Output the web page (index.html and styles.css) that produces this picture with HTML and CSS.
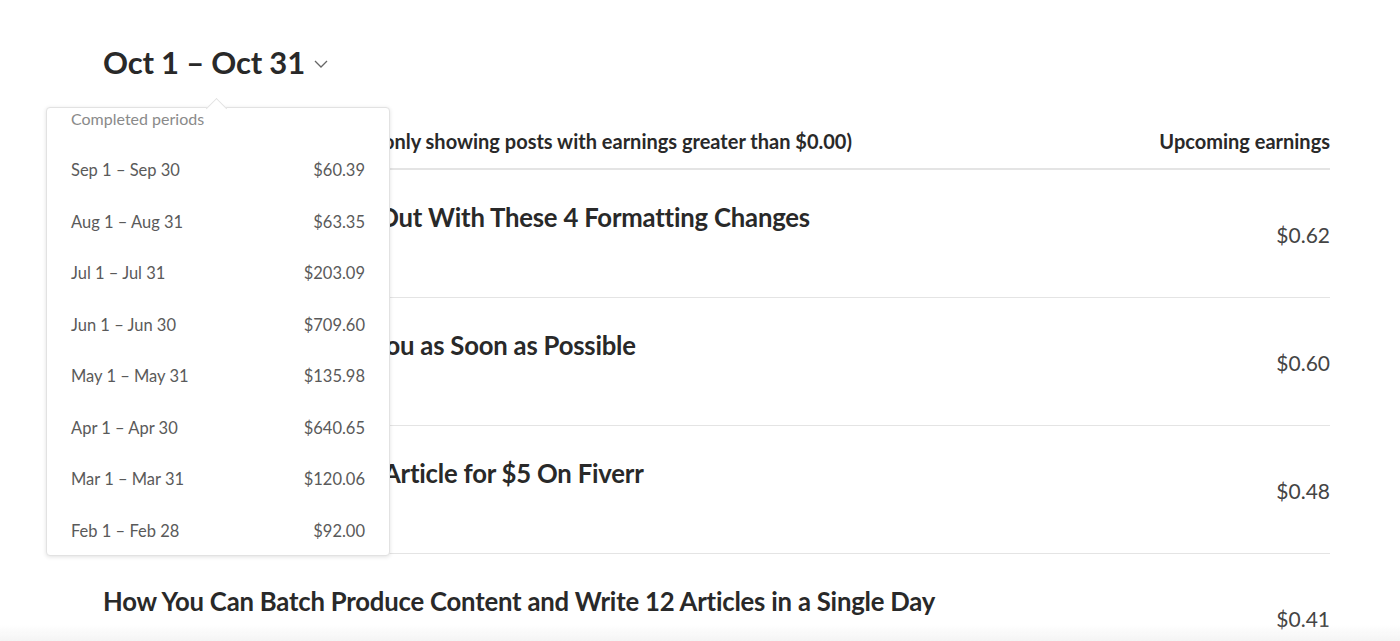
FILE: index.html
```html
<!DOCTYPE html>
<html lang="en">
<head>
<meta charset="utf-8">
<title>Earnings</title>
<link rel="stylesheet" href="styles.css">
</head>
<body>
<main class="page">
  <h1 class="period">Oct 1 – Oct 31 <svg class="chev" viewBox="0 0 14 8" width="14" height="8"><path d="M1 1 L7 7 L13 1" fill="none" stroke="#666" stroke-width="1.3"/></svg></h1>

  <div class="table">
    <div class="thead">
      <span class="th-title">Stories published in the period (only showing posts with earnings greater than $0.00)</span>
      <span class="th-amt">Upcoming earnings</span>
    </div>
    <div class="row">
      <span class="title">Make Your Article Stand Out With These 4 Formatting Changes</span>
      <span class="amt">$0.62</span>
    </div>
    <div class="row">
      <span class="title">Why Medium Must Pay You as Soon as Possible</span>
      <span class="amt">$0.60</span>
    </div>
    <div class="row">
      <span class="title">I Had Someone Write an Article for $5 On Fiverr</span>
      <span class="amt">$0.48</span>
    </div>
    <div class="row">
      <span class="title">How You Can Batch Produce Content and Write 12 Articles in a Single Day</span>
      <span class="amt">$0.41</span>
    </div>
  </div>
</main>

<div class="menu">
  <div class="menu-head">Completed periods</div>
  <ul class="menu-list">
    <li class="menu-item"><span>Sep 1 – Sep 30</span><span>$60.39</span></li>
    <li class="menu-item"><span>Aug 1 – Aug 31</span><span>$63.35</span></li>
    <li class="menu-item"><span>Jul 1 – Jul 31</span><span>$203.09</span></li>
    <li class="menu-item"><span>Jun 1 – Jun 30</span><span>$709.60</span></li>
    <li class="menu-item"><span>May 1 – May 31</span><span>$135.98</span></li>
    <li class="menu-item"><span>Apr 1 – Apr 30</span><span>$640.65</span></li>
    <li class="menu-item"><span>Mar 1 – Mar 31</span><span>$120.06</span></li>
    <li class="menu-item"><span>Feb 1 – Feb 28</span><span>$92.00</span></li>
  </ul>
</div>

<div class="bottom-fade"></div>
</body>
</html>
```

FILE: styles.css
```css
* { box-sizing: border-box; }

html, body {
  margin: 0;
  padding: 0;
  background: #ffffff;
  overflow: hidden;
}

body {
  font-family: Lato, "Open Sans", "Liberation Sans", sans-serif;
  color: #292929;
  width: 1400px;
  height: 641px;
}

.page {
  padding: 38px 70px 0 103px;
}

.period {
  margin: 0;
  font-size: 31px;
  line-height: 48px;
  font-weight: 700;
  color: #292929;
  letter-spacing: -0.2px;
  display: flex;
  align-items: center;
}

.chev {
  margin-left: 9px;
  margin-top: 4px;
}

.table {
  margin-top: 40px;
}

.thead {
  display: flex;
  justify-content: space-between;
  align-items: flex-end;
  height: 44px;
  padding-bottom: 15px;
  border-bottom: 2px solid #e4e4e4;
  font-size: 20px;
  font-weight: 700;
  color: #292929;
  white-space: nowrap;
}

.row {
  display: flex;
  justify-content: space-between;
  align-items: flex-start;
  height: 128px;
  border-bottom: 1px solid #e4e4e4;
  padding-top: 31px;
}

.title {
  font-size: 25.7px;
  line-height: 32px;
  font-weight: 700;
  color: #292929;
  letter-spacing: -0.2px;
}

.amt {
  font-size: 21px;
  line-height: 24px;
  color: #444;
  margin-top: 22px;
}

.menu {
  position: absolute;
  left: 46px;
  top: 107px;
  width: 344px;
  height: 449px;
  background: #fff;
  border: 1px solid #e2e2e2;
  border-radius: 4px;
  box-shadow: 0 1px 4px rgba(0,0,0,0.12);
  padding: 0 24px 0 24px;
}

.menu::before {
  content: "";
  position: absolute;
  left: 162px;
  top: -7px;
  width: 14px;
  height: 14px;
  background: #fff;
  border-left: 1px solid #e2e2e2;
  border-top: 1px solid #e2e2e2;
  transform: rotate(45deg);
}

.menu-head {
  font-size: 16px;
  line-height: 22px;
  color: #8a8a8a;
}

.menu-list {
  list-style: none;
  margin: 29px 0 0 0;
  padding: 0;
}

.menu-item {
  display: flex;
  justify-content: space-between;
  font-size: 16.5px;
  line-height: 22px;
  height: 51.5px;
  color: #5a5a5a;
}

.bottom-fade {
  position: fixed;
  left: 0;
  right: 0;
  bottom: 0;
  height: 16px;
  background: linear-gradient(to bottom, rgba(244,244,244,0), rgba(244,244,244,1));
  pointer-events: none;
}
```
